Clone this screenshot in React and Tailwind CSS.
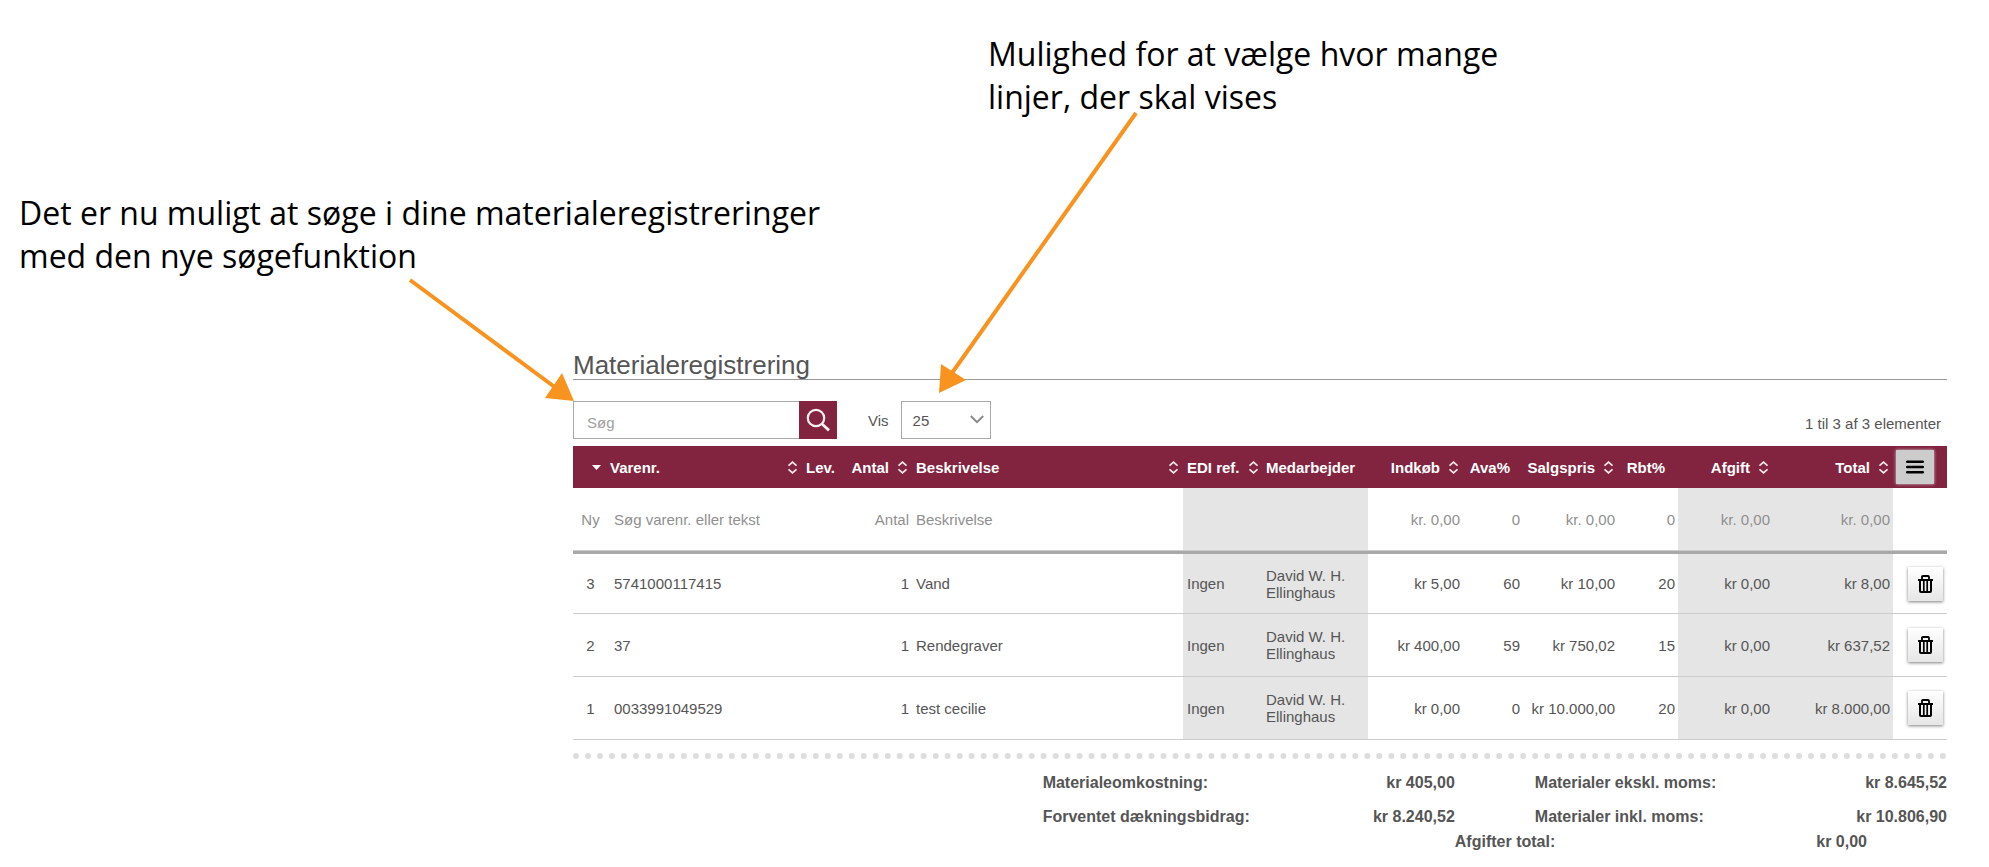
const SortIcon = () => (
  <svg width="9" height="13" viewBox="0 0 9 13" fill="none" stroke="#f3e9ec" strokeWidth="1.7" className="shrink-0">
    <path d="M0.5 4.7 L4.5 1.1 L8.5 4.7 M0.5 8.3 L4.5 11.9 L8.5 8.3" />
  </svg>
);

const TrashIcon = () => (
  <svg width="15" height="18" viewBox="0 0 15 18" fill="none" stroke="#000">
    <path strokeWidth="1.8" d="M4 4.5 V1.9 Q4 1 5 1 H10 Q11 1 11 1.9 V4.5" />
    <path strokeWidth="2" d="M0 5 H15" />
    <path strokeWidth="2" d="M2 5 V16 Q2 17 3 17 H12 Q13 17 13 16 V5" />
    <path strokeWidth="1.7" d="M5.8 5 V17 M9.2 5 V17" />
  </svg>
);

const rows = [
  { nr: "3", vare: "5741000117415", antal: "1", besk: "Vand", indkob: "kr 5,00", ava: "60", salg: "kr 10,00", rbt: "20", total: "kr 8,00", h: "h-[60px]" },
  { nr: "2", vare: "37", antal: "1", besk: "Rendegraver", indkob: "kr 400,00", ava: "59", salg: "kr 750,02", rbt: "15", total: "kr 637,52", h: "h-[63px]" },
  { nr: "1", vare: "0033991049529", antal: "1", besk: "test cecilie", indkob: "kr 0,00", ava: "0", salg: "kr 10.000,00", rbt: "20", total: "kr 8.000,00", h: "h-[63px]" },
];

const Th = ({ children, sort, align = "justify-start", pad = "pr-[5px]" }) => (
  <th scope="col" className="p-0 font-bold">
    <div className={`flex items-center gap-[9px] pl-1 ${pad} ${align}`}>
      <span className="whitespace-nowrap">{children}</span>
      {sort && <SortIcon />}
    </div>
  </th>
);

const NewInput = ({ label, value, className }) => (
  <input aria-label={label} placeholder={value} className={`block w-full min-w-0 bg-transparent outline-none placeholder:text-[#8f8f8f] placeholder:opacity-100 ${className}`} />
);

const Sum = ({ label, value }) => (
  <div className="flex w-[30%] justify-between">
    <dt>{label}</dt>
    <dd>{value}</dd>
  </div>
);

export default function App() {
  return (
    <main className="relative min-h-screen bg-white pt-8 font-['Liberation_Sans',Arial,sans-serif] text-[15px] leading-[17px] text-[#555]">
      <p className="ml-[988px] font-['Open_Sans','Noto_Sans',sans-serif] text-[32px] leading-[43px] text-black">
        Mulighed for at vælge hvor mange
        <br />
        linjer, der skal vises
      </p>
      <p className="mt-[73px] ml-[19px] font-['Open_Sans','Noto_Sans',sans-serif] text-[32px] leading-[43px] text-black">
        Det er nu muligt at søge i dine materialeregistreringer
        <br />
        med den nye søgefunktion
      </p>

      <section className="mt-[71px] mr-[42px] ml-[573px]">
        <h1 className="border-b border-[#999] pt-[3px] text-[26px] leading-[28px]">Materialeregistrering</h1>

        <div className="mt-[21px] flex items-center">
          <form className="flex" onSubmit={(e) => e.preventDefault()}>
            <input type="search" aria-label="Søg" placeholder="Søg" className="h-[38px] w-[226px] border border-r-0 border-[#a9a9a9] pt-1 pl-[13px] outline-none placeholder:text-[#a0a0a0] placeholder:opacity-100" />
            <button type="submit" aria-label="Søg" className="flex h-[38px] w-[38px] items-center justify-center bg-[#82233f]">
              <svg width="24" height="24" viewBox="0 0 24 24" fill="none" stroke="#f7f0f2" strokeWidth="2.2">
                <circle cx="10" cy="10" r="8.2" />
                <path d="M15.8 15.8 L23 22.4" strokeWidth="2.8" />
              </svg>
            </button>
          </form>
          <label htmlFor="antal-linjer" className="ml-[31px]">Vis</label>
          <div className="relative ml-3">
            <select id="antal-linjer" defaultValue="25" className="block h-[38px] w-[90px] appearance-none border border-[#a9a9a9] bg-white pl-[11px]">
              <option>10</option>
              <option>25</option>
              <option>50</option>
              <option>100</option>
            </select>
            <svg width="14" height="9" viewBox="0 0 14 9" fill="none" stroke="#888" strokeWidth="1.9" className="pointer-events-none absolute top-[14px] right-[7px]">
              <path d="M0.8 1 L7 7.2 L13.2 1" />
            </svg>
          </div>
          <span className="mt-[7px] mr-[6px] ml-auto">1 til 3 af 3 elementer</span>
        </div>

        <table className="mt-[7px] w-full table-fixed border-separate border-spacing-0 text-left">
          <colgroup>
            <col className="w-[33px]" />
            <col className="w-[196px]" />
            <col className="w-[45px]" />
            <col className="w-[65px]" />
            <col />
            <col className="w-[79px]" />
            <col className="w-[106px]" />
            <col className="w-[95px]" />
            <col className="w-[60px]" />
            <col className="w-[95px]" />
            <col className="w-[60px]" />
            <col className="w-[95px]" />
            <col className="w-[120px]" />
            <col className="w-[54px]" />
          </colgroup>
          <thead>
            <tr className="h-[42px] bg-[#82233f] text-white">
              <th scope="col" aria-label="Nr." className="p-0">
                <svg width="9" height="5" viewBox="0 0 9 5" className="mr-[5px] ml-auto block">
                  <path d="M0 0 H9 L4.5 5 Z" fill="#fff" />
                </svg>
              </th>
              <Th sort align="justify-between">Varenr.</Th>
              <Th>Lev.</Th>
              <Th sort align="justify-end">Antal</Th>
              <Th sort align="justify-between">Beskrivelse</Th>
              <Th sort align="justify-between">EDI ref.</Th>
              <Th>Medarbejder</Th>
              <Th sort align="justify-end">Indkøb</Th>
              <Th align="justify-end" pad="pr-[13px]">Ava%</Th>
              <Th sort align="justify-end">Salgspris</Th>
              <Th align="justify-end" pad="pr-[13px]">Rbt%</Th>
              <Th sort align="justify-end">Afgift</Th>
              <Th sort align="justify-end">Total</Th>
              <th scope="col" className="p-0">
                <button type="button" aria-label="Menu" className="ml-[3px] flex h-[34px] w-[38px] items-center justify-center bg-[#ccc] shadow-[0_0_3px_#ccc]">
                  <svg width="18" height="14" viewBox="0 0 18 14" stroke="#000" strokeWidth="2.5" strokeLinecap="round">
                    <path d="M1.2 1.8 H16.8 M1.2 7 H16.8 M1.2 12.2 H16.8" />
                  </svg>
                </button>
              </th>
            </tr>
          </thead>
          <tbody>
            <tr className="h-[62px] text-[#8f8f8f]">
              <td className="py-0 pr-0 pl-[2px] text-center">Ny</td>
              <td className="p-0" colSpan={2}><NewInput label="Varenr." value="Søg varenr. eller tekst" className="pl-2" /></td>
              <td className="p-0"><NewInput label="Antal" value="Antal" className="pr-[3px] text-right" /></td>
              <td className="p-0"><NewInput label="Beskrivelse" value="Beskrivelse" className="pl-1" /></td>
              <td className="bg-[#e5e5e5] p-0" colSpan={2} />
              <td className="p-0"><NewInput label="Indkøb" value="kr. 0,00" className="pr-[3px] text-right" /></td>
              <td className="p-0"><NewInput label="Ava%" value="0" className="pr-[3px] text-right" /></td>
              <td className="p-0"><NewInput label="Salgspris" value="kr. 0,00" className="pr-[3px] text-right" /></td>
              <td className="p-0"><NewInput label="Rbt%" value="0" className="pr-[3px] text-right" /></td>
              <td className="bg-[#e5e5e5] py-0 pr-[3px] pl-0 text-right">kr. 0,00</td>
              <td className="bg-[#e5e5e5] py-0 pr-[3px] pl-0 text-right">kr. 0,00</td>
              <td className="p-0" />
            </tr>
            <tr aria-hidden="true">
              <td colSpan={14} className="p-0">
                <div className="h-1 border-t border-[#ccc] bg-[#a9a9a9]" />
              </td>
            </tr>
            {rows.map((r) => (
              <tr key={r.nr} className={`[&>td]:border-b [&>td]:border-[#ccc] ${r.h}`}>
                <td className="py-0 pr-0 pl-[2px] text-center">{r.nr}</td>
                <td className="py-0 pr-0 pl-2">{r.vare}</td>
                <td className="p-0" />
                <td className="py-0 pr-[3px] pl-0 text-right">{r.antal}</td>
                <td className="py-0 pr-0 pl-1">{r.besk}</td>
                <td className="bg-[#e5e5e5] py-0 pr-0 pl-1">Ingen</td>
                <td className="bg-[#e5e5e5] py-0 pr-0 pl-1">David W. H. Ellinghaus</td>
                <td className="py-0 pr-[3px] pl-0 text-right">{r.indkob}</td>
                <td className="py-0 pr-[3px] pl-0 text-right">{r.ava}</td>
                <td className="py-0 pr-[3px] pl-0 text-right">{r.salg}</td>
                <td className="py-0 pr-[3px] pl-0 text-right">{r.rbt}</td>
                <td className="bg-[#e5e5e5] py-0 pr-[3px] pl-0 text-right">kr 0,00</td>
                <td className="bg-[#e5e5e5] py-0 pr-[3px] pl-0 text-right">{r.total}</td>
                <td className="p-0">
                  <button type="button" aria-label={`Slet ${r.besk}`} className="mr-1 ml-auto flex h-[34px] w-[35px] items-center justify-center bg-linear-to-b from-white to-[#e6e6e6] shadow-[0_1px_3px_rgba(0,0,0,0.5)]">
                    <TrashIcon />
                  </button>
                </td>
              </tr>
            ))}
          </tbody>
        </table>

        <div className="mt-[13px] border-t-[6px] border-dotted border-[#ddd]" />

        <dl className="mt-[15px] text-base leading-[18px] font-bold">
          <div className="flex justify-end gap-20">
            <Sum label="Materialeomkostning:" value="kr 405,00" />
            <Sum label="Materialer ekskl. moms:" value="kr 8.645,52" />
          </div>
          <div className="mt-4 flex justify-end gap-20">
            <Sum label="Forventet dækningsbidrag:" value="kr 8.240,52" />
            <Sum label="Materialer inkl. moms:" value="kr 10.806,90" />
          </div>
          <div className="mt-[7px] flex justify-end after:w-20 after:shrink-0">
            <Sum label="Afgifter total:" value="kr 0,00" />
          </div>
        </dl>
      </section>

      <svg width="1160" height="420" viewBox="0 0 1160 420" className="pointer-events-none absolute top-0 left-0" fill="#f7931e" stroke="none" aria-hidden="true">
        <path d="M410 280 L556 388 M1136 113 L952 373" stroke="#f7931e" strokeWidth="4" />
        <path d="M574 401 L562 373 L545 398 Z M939 393 L941 364 L966 380 Z" />
      </svg>
    </main>
  );
}
